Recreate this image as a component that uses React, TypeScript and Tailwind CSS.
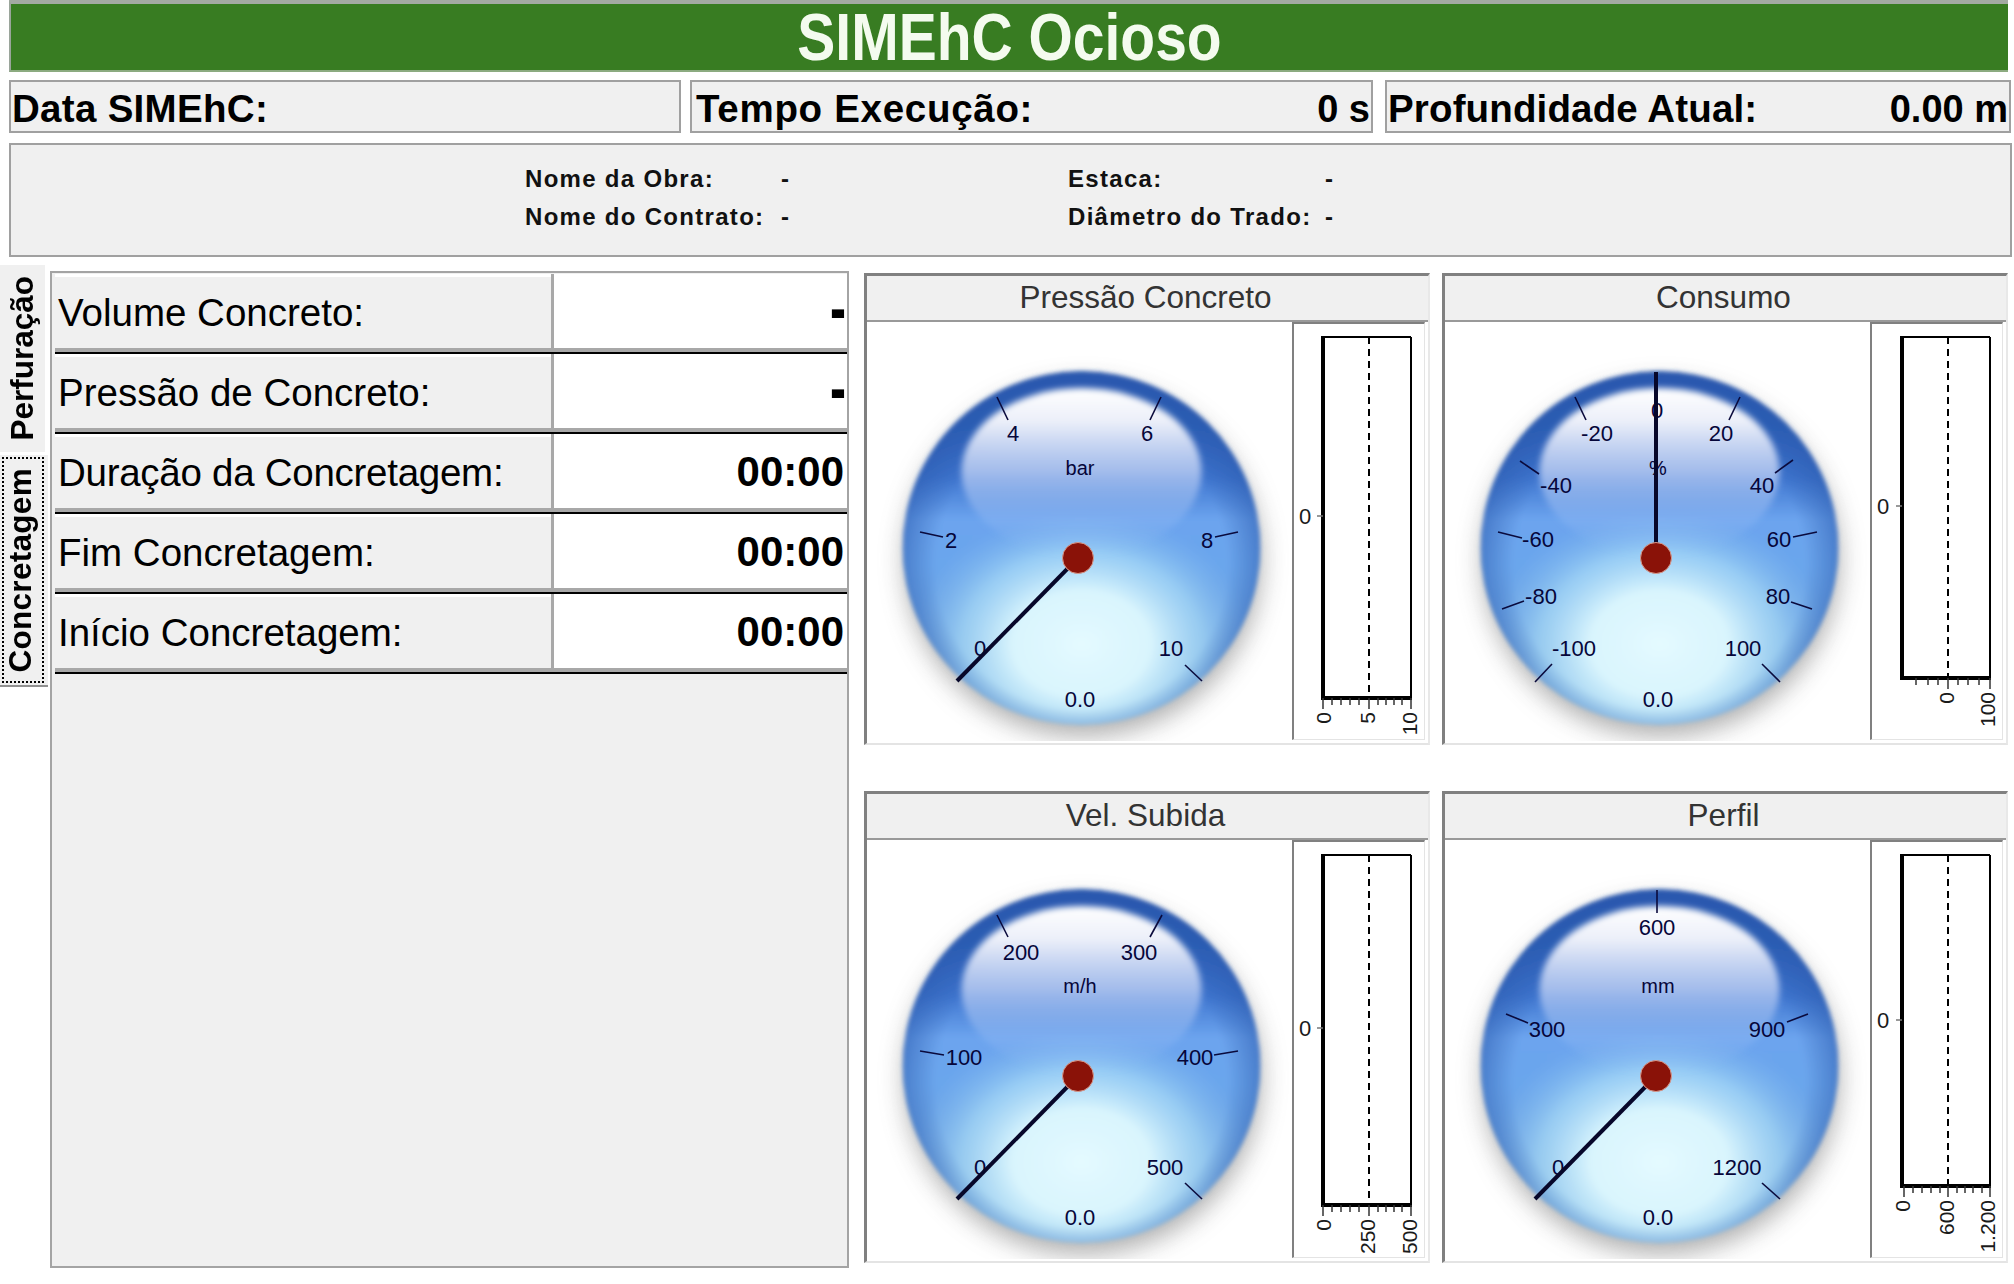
type Tick = [number, number, number, number];
type Label = [number, number, string];

type GaugeData = {
  id: string;
  title: string;
  unit: string;
  ticks: Tick[];
  labels: Label[];
  needle: [number, number];
};

type ChartData = {
  left: number;
  right: number;
  dash: number;
  bottom: number;
  yLabel: number;
  xLabels: [number, string][];
  ticks: number[];
  minors: number[];
};

const gauges: { gauge: GaugeData; chart: ChartData }[] = [
  {
    gauge: {
      id: 'pressao',
      title: 'Pressão Concreto',
      unit: 'bar',
      needle: [90, 359],
      ticks: [
        [130, 75, 141, 98],
        [294, 75, 283, 98],
        [53, 210, 76, 215],
        [371, 210, 348, 215],
        [318, 343, 335, 359],
      ],
      labels: [
        [113, 326, '0'],
        [84, 218, '2'],
        [146, 111, '4'],
        [280, 111, '6'],
        [340, 218, '8'],
        [304, 326, '10'],
      ],
    },
    chart: {
      left: 31,
      right: 119,
      dash: 77,
      bottom: 376,
      yLabel: 194,
      xLabels: [[31, '0'], [75, '5'], [117, '10']],
      ticks: [31, 77, 119],
      minors: [40, 49, 58, 67, 86, 94, 102, 110],
    },
  },
  {
    gauge: {
      id: 'consumo',
      title: 'Consumo',
      unit: '%',
      needle: [211, 50],
      ticks: [
        [130, 75, 141, 98],
        [295, 75, 284, 98],
        [75, 139, 94, 152],
        [348, 138, 330, 151],
        [53, 210, 77, 216],
        [372, 210, 348, 215],
        [57, 287, 79, 279],
        [367, 287, 346, 280],
        [90, 360, 107, 342],
        [317, 342, 335, 360],
      ],
      labels: [
        [212, 88, '0'],
        [152, 111, '-20'],
        [276, 111, '20'],
        [111, 163, '-40'],
        [317, 163, '40'],
        [93, 217, '-60'],
        [334, 217, '60'],
        [96, 274, '-80'],
        [333, 274, '80'],
        [129, 326, '-100'],
        [298, 326, '100'],
      ],
    },
    chart: {
      left: 32,
      right: 120,
      dash: 78,
      bottom: 356,
      yLabel: 184,
      xLabels: [[76, '0'], [117, '100']],
      ticks: [78, 120],
      minors: [46, 58, 68, 88, 98, 109],
    },
  },
  {
    gauge: {
      id: 'subida',
      title: 'Vel. Subida',
      unit: 'm/h',
      needle: [90, 359],
      ticks: [
        [130, 75, 141, 97],
        [295, 75, 283, 97],
        [53, 211, 77, 215],
        [371, 211, 347, 215],
        [318, 343, 335, 359],
      ],
      labels: [
        [113, 327, '0'],
        [97, 217, '100'],
        [154, 112, '200'],
        [272, 112, '300'],
        [328, 217, '400'],
        [298, 327, '500'],
      ],
    },
    chart: {
      left: 31,
      right: 119,
      dash: 77,
      bottom: 365,
      yLabel: 188,
      xLabels: [[31, '0'], [75, '250'], [117, '500']],
      ticks: [31, 77, 119],
      minors: [40, 49, 58, 67, 86, 94, 102, 110],
    },
  },
  {
    gauge: {
      id: 'perfil',
      title: 'Perfil',
      unit: 'mm',
      needle: [90, 359],
      ticks: [
        [212, 50, 212, 73],
        [61, 174, 83, 183],
        [363, 174, 342, 182],
        [317, 343, 335, 359],
      ],
      labels: [
        [113, 327, '0'],
        [102, 189, '300'],
        [212, 87, '600'],
        [322, 189, '900'],
        [292, 327, '1200'],
      ],
    },
    chart: {
      left: 32,
      right: 120,
      dash: 78,
      bottom: 346,
      yLabel: 180,
      xLabels: [[32, '0'], [76, '600'], [117, '1.200']],
      ticks: [34, 78, 120],
      minors: [43, 52, 61, 70, 87, 95, 103, 112],
    },
  },
];

const rows = [
  { label: 'Volume Concreto:', value: '-', spacing: '' },
  { label: 'Pressão de Concreto:', value: '-', spacing: '' },
  { label: 'Duração da Concretagem:', value: '00:00', spacing: 'tracking-[-0.27px]' },
  { label: 'Fim Concretagem:', value: '00:00', spacing: '' },
  { label: 'Início Concretagem:', value: '00:00', spacing: '' },
];

function Gauge({ data }: { data: GaugeData }) {
  const { id } = data;
  return (
    <svg width="422" height="419" viewBox="0 0 422 419" className="shrink-0 bg-white">
      <defs>
        <filter id={`${id}-blur`} x="-20%" y="-20%" width="140%" height="140%">
          <feGaussianBlur stdDeviation="13" />
        </filter>
        <filter id={`${id}-soft`} x="-5%" y="-5%" width="110%" height="110%">
          <feGaussianBlur stdDeviation="2" />
        </filter>
        <filter id={`${id}-soft-shine`} x="-10%" y="-10%" width="120%" height="120%">
          <feGaussianBlur stdDeviation="3" />
        </filter>
        <clipPath id={`${id}-ball`}>
          <ellipse cx="214.5" cy="226" rx="179" ry="177" />
        </clipPath>
        <linearGradient id={`${id}-body`} x1="0" y1="0" x2="0" y2="1">
          <stop offset="0" stopColor="#2455ad" />
          <stop offset="0.14" stopColor="#2a5cb5" />
          <stop offset="0.3" stopColor="#3f76d0" />
          <stop offset="0.42" stopColor="#6ca4ee" />
          <stop offset="0.55" stopColor="#6ba6ec" />
          <stop offset="0.8" stopColor="#6a9fdc" />
          <stop offset="1" stopColor="#86b6de" />
        </linearGradient>
        <radialGradient id={`${id}-glow`} cx="0.5" cy="0.5" r="0.5">
          <stop offset="0" stopColor="#e4faff" stopOpacity="1" />
          <stop offset="0.4" stopColor="#dcf7fe" stopOpacity="0.97" />
          <stop offset="0.7" stopColor="#aee0f9" stopOpacity="0.65" />
          <stop offset="1" stopColor="#86bdf2" stopOpacity="0" />
        </radialGradient>
        <radialGradient id={`${id}-rim`} cx="0.5" cy="0.55" r="0.58">
          <stop offset="0.7" stopColor="#2c5cb0" stopOpacity="0" />
          <stop offset="0.85" stopColor="#2c5cb0" stopOpacity="0.5" />
          <stop offset="1" stopColor="#2a58ae" stopOpacity="0.95" />
        </radialGradient>
        <linearGradient id={`${id}-shine`} x1="0" y1="0" x2="0" y2="1">
          <stop offset="0" stopColor="#ffffff" stopOpacity="1" />
          <stop offset="0.2" stopColor="#f6f7fd" stopOpacity="0.95" />
          <stop offset="0.5" stopColor="#c4d4f6" stopOpacity="0.75" />
          <stop offset="0.78" stopColor="#a0c2f6" stopOpacity="0.3" />
          <stop offset="1" stopColor="#8ab6f4" stopOpacity="0" />
        </linearGradient>
      </defs>

      <ellipse cx="216" cy="238" rx="178" ry="176" fill="#6b6b6b" opacity="0.55" filter={`url(#${id}-blur)`} />
      <g filter={`url(#${id}-soft)`}>
        <g clipPath={`url(#${id}-ball)`}>
          <ellipse cx="214.5" cy="226" rx="179" ry="177" fill={`url(#${id}-body)`} />
          <ellipse cx="214.5" cy="322" rx="172" ry="132" fill={`url(#${id}-glow)`} />
          <ellipse cx="214.5" cy="226" rx="179" ry="177" fill={`url(#${id}-rim)`} />
        </g>
      </g>
      <ellipse cx="214.5" cy="150" rx="120" ry="84" fill={`url(#${id}-shine)`} filter={`url(#${id}-soft-shine)`} />

      <g stroke="#0a0a3c" strokeWidth="1.6">
        {data.ticks.map(([x1, y1, x2, y2], i) => (
          <line key={i} x1={x1} y1={y1} x2={x2} y2={y2} />
        ))}
      </g>

      <g fill="#06063a" fontSize="22" textAnchor="middle">
        {data.labels.map(([x, y, text]) => (
          <text key={text} x={x} y={y} dy=".36em">{text}</text>
        ))}
        <text x="213" y="146" dy=".36em" fontSize="20">{data.unit}</text>
        <text x="213" y="377" dy=".36em">0.0</text>
      </g>

      <line x1="211" y1="236" x2={data.needle[0]} y2={data.needle[1]} stroke="#07072a" strokeWidth="4" />
      <circle cx="211" cy="236" r="15.5" fill="#8a1208" stroke="#d89a8c" strokeWidth="1" />
    </svg>
  );
}

function BarChart({ data }: { data: ChartData }) {
  const { left, right, dash, bottom, yLabel } = data;
  return (
    <div className="ml-[3px] h-[418px] w-[133px] shrink-0 border-t-[2px] border-l-[2px] border-r border-b border-t-[#808080] border-l-[#808080] border-r-[#e4e4e4] border-b-[#e4e4e4] bg-white">
      <svg width="131" height="415" viewBox="2 2 131 415" className="block">
        <line x1={dash} y1="15" x2={dash} y2={bottom} stroke="#000" strokeWidth="2" strokeDasharray="7 5" />
        <line x1={left} y1="15" x2={right} y2="15" stroke="#000" strokeWidth="2" />
        <line x1={right} y1="15" x2={right} y2={bottom} stroke="#000" strokeWidth="2" />
        <line x1={left} y1="14" x2={left} y2={bottom + 2} stroke="#000" strokeWidth="4" />
        <line x1={left} y1={bottom} x2={right + 1} y2={bottom} stroke="#000" strokeWidth="4" />

        <line x1={left - 6} y1={yLabel} x2={left} y2={yLabel} stroke="#777" strokeWidth="1.5" />
        <text x="13" y={yLabel} dy=".36em" textAnchor="middle" fontSize="22" fill="#1a1a1a">0</text>

        <g stroke="#333" strokeWidth="1.5">
          {data.ticks.map(x => (
            <line key={x} x1={x} y1={bottom} x2={x} y2={bottom + 11} />
          ))}
          {data.minors.map(x => (
            <line key={x} x1={x} y1={bottom} x2={x} y2={bottom + 7} />
          ))}
        </g>

        <g fontSize="21" fill="#1a1a1a" textAnchor="end">
          {data.xLabels.map(([x, text]) => (
            <text key={text} transform={`translate(${x} ${bottom + 14}) rotate(-90)`} dy=".36em">
              {text}
            </text>
          ))}
        </g>
      </svg>
    </div>
  );
}

export default function App() {
  return (
    <div className="h-[1284px] w-[2014px] overflow-hidden bg-white text-black [font-family:'Liberation_Sans',Arial,sans-serif]">
      {/* Status */}
      <div className="ml-[9px] flex h-[72px] w-[1999px] items-center justify-center border-t-[4px] border-b-[2px] border-l-[2px] border-t-[#a3aaa3] border-b-[#8cab80] border-l-[#9aa59a] bg-[#387c22]">
        <span className="inline-block scale-y-[1.17] text-[57px] leading-none font-bold text-[#f4fbef]">SIMEhC Ocioso</span>
      </div>

      <div className="mt-[8px] ml-[9px] flex text-[38.5px] font-bold">
        <div className="flex h-[53px] w-[672px] items-center border-2 border-[#a0a0a0] bg-[#f0f0f0] pt-[5px] pl-[1px] tracking-[0.3px]">Data SIMEhC:</div>
        <div className="ml-[9px] flex h-[53px] w-[683px] items-center justify-between border-2 border-[#a0a0a0] bg-[#f0f0f0] pt-[5px] pr-[1px] pl-[4px]">
          <span className="tracking-[0.7px]">Tempo Execução:</span>
          <span className="text-[38px]">0 s</span>
        </div>
        <div className="ml-[12px] flex h-[53px] w-[626px] items-center justify-between border-2 border-[#a0a0a0] bg-[#f0f0f0] pt-[5px] pr-[1px] pl-[1px]">
          <span className="tracking-[0.15px]">Profundidade Atual:</span>
          <span className="text-[38px]">0.00 m</span>
        </div>
      </div>

      <div className="mt-[10px] ml-[9px] flex h-[114px] w-[2003px] items-center border-2 border-[#a0a0a0] bg-[#f0f0f0] pb-[4px] pl-[514px] text-[24px] font-bold tracking-[1.3px] text-[#111]">
        <div className="grid grid-cols-[256px_287px_257px_40px] gap-y-[6px] leading-[32px]">
          <span>Nome da Obra:</span>
          <span>-</span>
          <span>Estaca:</span>
          <span>-</span>
          <span>Nome do Contrato:</span>
          <span>-</span>
          <span className="whitespace-nowrap">Diâmetro do Trado:</span>
          <span>-</span>
        </div>
      </div>

      <div className="mt-[8px] flex items-start">
        {/* Tabs */}
        <div className="flex w-[50px] shrink-0 flex-col text-[31.5px] font-bold">
          <div className="flex h-[187px] w-[45px] items-center justify-center bg-[#f0f0f0]">
            <span className="rotate-180 leading-none [writing-mode:vertical-rl]">Perfuração</span>
          </div>
          <div className="mt-[3px] h-[232px] w-[48px] border-b-2 border-[#909090] bg-[#f0f0f0] pt-[2px] pl-[2px]">
            <div className="flex h-[226px] w-[42px] items-center justify-center border-2 border-dotted border-black pr-[4px]">
              <span className="rotate-180 leading-none tracking-[0.3px] [writing-mode:vertical-rl]">Concretagem</span>
            </div>
          </div>
        </div>

        {/* Concretagem table */}
        <div className="mt-[6px] h-[997px] w-[799px] shrink-0 border-2 border-[#a4a4a4] bg-[#f0f0f0] pt-[1px]">
          {rows.map(row => (
            <div key={row.label} className="ml-[3px] flex h-[80px] border-b-2 border-black bg-white">
              <div className={`mt-[3px] flex w-[496px] items-center border-b-4 border-[#a8a8a8] bg-[#f0f0f0] pt-[1px] pl-[3px] text-[38.5px] ${row.spacing}`}>
                {row.label}
              </div>
              <div className="flex flex-1 items-center justify-end border-b-4 border-l-[3px] border-[#a8a8a8] pr-[3px] text-[42px] font-bold">
                {row.value === '-' ? <span className="inline-block translate-x-[2px] -translate-y-[3px] scale-y-[1.5] text-[48px] leading-none">-</span> : row.value}
              </div>
            </div>
          ))}
        </div>

        {/* Gauges */}
        <div className="mt-[8px] ml-[15px] grid grid-cols-[566px_566px] gap-x-[12px] gap-y-[46px]">
          {gauges.map(({ gauge, chart }) => (
            <div key={gauge.id} className="h-[472px] border-t-[3px] border-r-2 border-b-2 border-l-[3px] border-t-[#808080] border-r-[#e8e8e8] border-b-[#e4e4e4] border-l-[#808080] bg-white">
              <div className="flex h-[46px] items-center justify-center border-b-2 border-[#999] bg-[#f0f0f0] pr-[4px] text-[31.5px] text-[#333]">
                {gauge.title}
              </div>
              <div className="flex">
                <Gauge data={gauge} />
                <BarChart data={chart} />
              </div>
            </div>
          ))}
        </div>
      </div>
    </div>
  );
}
